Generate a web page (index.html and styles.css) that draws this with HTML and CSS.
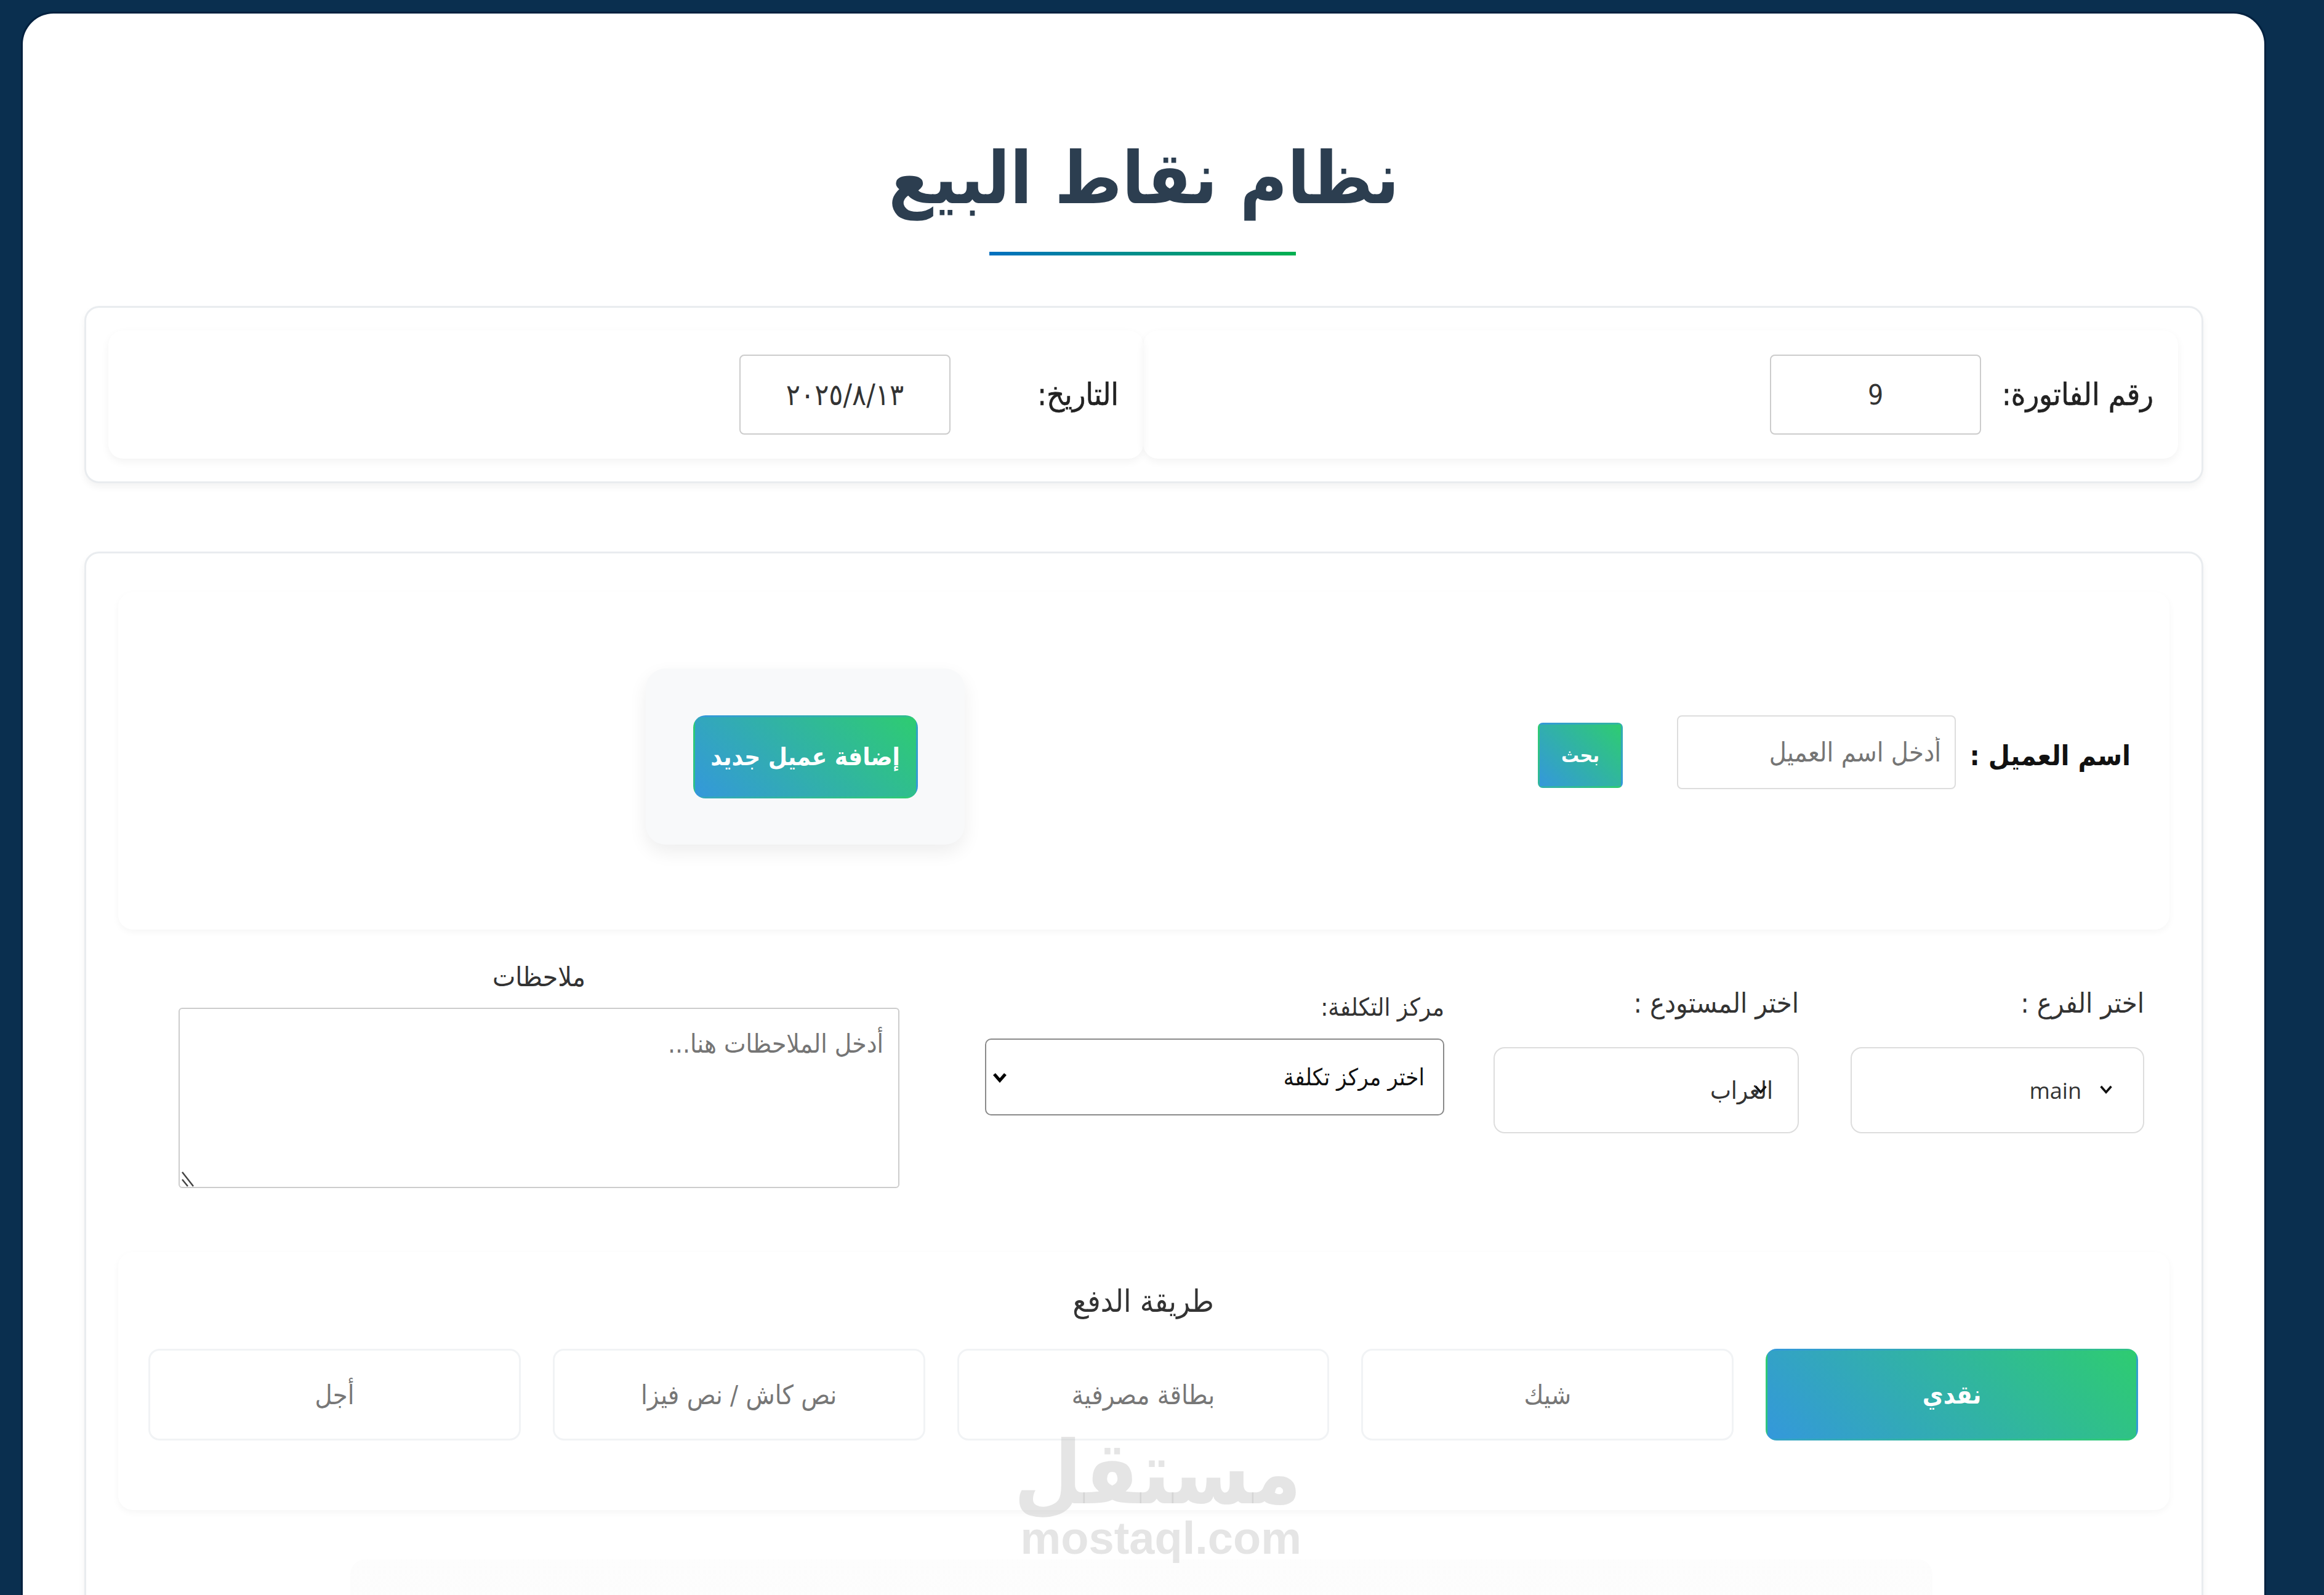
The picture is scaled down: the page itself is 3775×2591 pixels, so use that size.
FILE: index.html
```html
<!DOCTYPE html>
<html lang="ar" dir="rtl">
<head>
    <meta charset="UTF-8">
    <meta name="viewport" content="width=device-width, initial-scale=1.0">
    <title>نظام نقاط البيع</title>
    <link rel="stylesheet" href="styles.css">
</head>
<body>

    <div class="page">
        <h1 class="page-title">نظام نقاط البيع</h1>
        <div class="title-line"></div>

        <!-- رأس الفاتورة -->
        <section class="card invoice-card">
            <div class="invoice-part">
                <label class="invoice-label">رقم الفاتورة:</label>
                <input class="invoice-input" type="text" value="9">
            </div>
            <div class="invoice-part">
                <label class="invoice-label date-label">التاريخ:</label>
                <input class="invoice-input date-input" type="text" value="٢٠٢٥/٨/١٣">
            </div>
        </section>

        <section class="card main-card">
            <!-- العميل -->
            <div class="customer-card">
                <label class="customer-label">اسم العميل :</label>
                <input class="customer-input" type="text" placeholder="أدخل اسم العميل">
                <button class="search-btn" type="button">بحث</button>
                <div class="add-box">
                    <button class="add-btn" type="button">إضافة عميل جديد</button>
                </div>
            </div>

            <!-- الفرع والمستودع -->
            <div class="form-row">
                <div class="field field-branch">
                    <label class="field-label">اختر الفرع :</label>
                    <div class="select-wrap">
                        <select class="plain-select select-branch"><option>main</option></select>
                        <svg class="chevron" viewBox="0 0 20 14"><path d="M3 3l7 8 7-8" fill="none" stroke="#111" stroke-width="3"/></svg>
                    </div>
                </div>
                <div class="field field-store">
                    <label class="field-label">اختر المستودع :</label>
                    <div class="select-wrap">
                        <select class="plain-select select-store"><option>الغراب</option></select>
                        <svg class="chevron" viewBox="0 0 20 14"><path d="M3 3l7 8 7-8" fill="none" stroke="#111" stroke-width="3"/></svg>
                    </div>
                </div>
                <div class="field field-cost">
                    <label class="cost-label">مركز التكلفة:</label>
                    <div class="select-wrap">
                        <select class="cost-select"><option>اختر مركز تكلفة</option></select>
                        <svg class="cost-chevron" viewBox="0 0 20 14"><path d="M3 3l7 8 7-8" fill="none" stroke="#000" stroke-width="4"/></svg>
                    </div>
                </div>
                <div class="field field-notes">
                    <label class="notes-label">ملاحظات</label>
                    <div class="select-wrap">
                        <textarea class="notes-input" placeholder="أدخل الملاحظات هنا..."></textarea>
                        <svg class="resize-mark" viewBox="0 0 24 28"><path d="M2 4l18 23M2 16l9 11" fill="none" stroke="#444" stroke-width="2.5"/></svg>
                    </div>
                </div>
            </div>

            <!-- طريقة الدفع -->
            <div class="payment-card">
                <h3 class="payment-title">طريقة الدفع</h3>
                <div class="payment-list">
                    <button class="pay-btn active" type="button">نقدي</button>
                    <button class="pay-btn" type="button">شيك</button>
                    <button class="pay-btn" type="button">بطاقة مصرفية</button>
                    <button class="pay-btn" type="button">نص كاش / نص فيزا</button>
                    <button class="pay-btn" type="button">أجل</button>
                </div>
            </div>

            <div class="next-card"></div>
        </section>
    </div>

    <!-- علامة مستقل -->
    <div class="watermark">
        <div class="watermark-ar">مستقل</div>
        <div class="watermark-en">mostaql.com</div>
    </div>

</body>
</html>
```

FILE: styles.css
```css
* {
    margin: 0;
    padding: 0;
    box-sizing: border-box;
}

html,
body {
    height: 100vh;
    overflow: hidden;
}

body {
    padding: 22px 97px 0 37px;
    background-color: #0a2f4f;
    font-family: "DejaVu Sans Condensed", "DejaVu Sans", sans-serif;
    color: #2c3e50;
}

button,
input,
select,
textarea {
    font-family: inherit;
}

.page {
    height: 2800px;
    padding: 0 99px 0 100px;
    background: #fff;
    border-radius: 50px 50px 0 0;
    box-shadow: 0 0 0 3px #02213f;
}

.page-title {
    padding-top: 198px;
    height: 338px;
    font-size: 117px;
    line-height: 140px;
    font-weight: 700;
    text-align: center;
    color: #2c3e50;
}

.title-line {
    width: 498px;
    height: 6px;
    margin: 49px auto 82px;
    position: relative;
    left: -2px;
    background: linear-gradient(to right, #0070c0, #00b050);
}

.card {
    background: #fff;
    border: 3px solid #e9ecef;
    border-radius: 24px;
    box-shadow: 0 6px 12px rgba(0, 0, 0, 0.05);
}

/* رأس الفاتورة */
.invoice-card {
    display: flex;
    height: 288px;
    padding: 37px 38px 37px 36px;
}

.invoice-part {
    flex: 1;
    display: flex;
    align-items: center;
    padding: 0 40px;
    border-radius: 24px;
    box-shadow: 0 5px 14px rgba(0, 0, 0, 0.05);
}

.invoice-label {
    width: 255px;
    margin-left: 25px;
    font-size: 50px;
    font-weight: 500;
    color: #222;
    -webkit-text-stroke: 0.6px #222;
}

.date-label {
    width: 248px;
}

.invoice-input {
    width: 343px;
    height: 130px;
    border: 2px solid #ccc;
    border-radius: 8px;
    text-align: center;
    font-size: 44px;
    color: #333;
}

.date-input {
    font-size: 48px;
}

/* العميل */
.main-card {
    height: 1800px;
    margin-top: 111px;
    padding: 63px 52px 0 52px;
}

.customer-card {
    display: flex;
    align-items: center;
    height: 548px;
    padding: 0 63px 18px 0;
    border-radius: 24px;
    box-shadow: 0 4px 12px rgba(0, 0, 0, 0.04);
}

.customer-label {
    width: 260px;
    margin-left: 24px;
    font-size: 45px;
    font-weight: 700;
    color: #111;
    white-space: nowrap;
}

.customer-input {
    width: 453px;
    height: 120px;
    margin-bottom: 10px;
    padding: 0 22px;
    border: 2px solid #ddd;
    border-radius: 8px;
    font-size: 43px;
    color: #333;
}

.customer-input::placeholder,
.notes-input::placeholder {
    color: #757575;
}

.search-btn {
    width: 138px;
    height: 106px;
    margin-right: 88px;
    border: 3px solid transparent;
    border-radius: 8px;
    background: linear-gradient(45deg, #3498db, #2ecc71);
    color: #fff;
    font-size: 32px;
    font-weight: 700;
}

.add-box {
    display: flex;
    align-items: center;
    justify-content: center;
    width: 518px;
    height: 286px;
    margin-top: 4px;
    margin-right: 931px;
    background: #f8f9fa;
    border-radius: 32px;
    box-shadow: 0 12px 30px rgba(0, 0, 0, 0.07);
}

.add-btn {
    width: 365px;
    height: 135px;
    border: 3px solid transparent;
    border-radius: 20px;
    background: linear-gradient(45deg, #3498db, #2ecc71);
    color: #fff;
    font-size: 40px;
    font-weight: 700;
}

/* الفرع والمستودع */
.form-row {
    display: flex;
    align-items: flex-start;
    height: 524px;
    padding: 50px 41px 0 0;
}

.field-branch {
    width: 477px;
    margin-top: 43px;
}

.field-store {
    width: 496px;
    margin-top: 43px;
    margin-right: 84px;
}

.field-cost {
    width: 746px;
    margin-top: 54px;
    margin-right: 80px;
}

.field-notes {
    width: 1171px;
    margin-right: 139px;
}

.field-label {
    display: block;
    height: 54px;
    margin-bottom: 44px;
    font-size: 45px;
    line-height: 54px;
    font-weight: 500;
    color: #333;
}

.select-wrap {
    position: relative;
}

.plain-select {
    width: 100%;
    height: 140px;
    border: 2px solid #ddd;
    border-radius: 18px;
    background: #fff;
    appearance: none;
    font-size: 40px;
    color: #333;
}

.select-branch {
    padding-right: 100px;
    font-family: "Open Sans", sans-serif;
    font-size: 36px;
}

.select-store {
    padding-right: 40px;
}

.chevron {
    position: absolute;
    top: 60px;
    right: 50px;
    width: 24px;
    height: 17px;
}

.cost-label {
    display: block;
    height: 44px;
    margin-bottom: 29px;
    font-size: 40px;
    line-height: 44px;
    font-weight: 500;
    color: #333;
}

.cost-select {
    width: 100%;
    height: 125px;
    padding: 0 30px;
    border: 2px solid #8a8a8a;
    border-radius: 10px;
    background: #fff;
    appearance: none;
    font-size: 38px;
    font-weight: 500;
    color: #111;
}

.cost-chevron {
    position: absolute;
    top: 54px;
    left: 10px;
    width: 28px;
    height: 18px;
}

.notes-label {
    display: block;
    height: 54px;
    margin-bottom: 23px;
    font-size: 44px;
    line-height: 54px;
    text-align: center;
    color: #333;
}

.notes-input {
    display: block;
    width: 100%;
    height: 293px;
    padding: 32px 24px;
    border: 2px solid #ccc;
    border-radius: 6px;
    font-size: 42px;
    resize: none;
}

.resize-mark {
    position: absolute;
    bottom: 2px;
    left: 4px;
    width: 24px;
    height: 28px;
}

/* طريقة الدفع */
.payment-card {
    height: 419px;
    padding: 0 51px 0 49px;
    border-radius: 24px;
    box-shadow: 0 4px 12px rgba(0, 0, 0, 0.04);
}

.payment-title {
    height: 157px;
    padding-top: 50px;
    font-size: 50px;
    line-height: 60px;
    font-weight: 400;
    text-align: center;
    color: #333;
}

.payment-list {
    display: flex;
    gap: 52px;
}

.pay-btn {
    flex: 1;
    height: 149px;
    border: 3px solid #f1f3f5;
    border-radius: 18px;
    background: #fff;
    font-size: 43px;
    color: #777;
}

.pay-btn.active {
    border-color: transparent;
    background: linear-gradient(45deg, #3498db, #2ecc71);
    color: #fff;
    font-size: 41px;
    font-weight: 700;
}

.next-card {
    width: 2570px;
    height: 300px;
    margin: 80px 385px 0 0;
    background: linear-gradient(#fdfdfd, #f9f9f9);
    border-radius: 24px;
}

/* علامة مستقل */
.watermark {
    position: absolute;
    top: 2318px;
    left: 1659px;
    width: 455px;
    text-align: center;
    color: rgba(190, 190, 190, 0.4);
    font-weight: 700;
}

.watermark-ar {
    height: 146px;
    font-size: 142px;
    line-height: 150px;
}

.watermark-en {
    font-family: "Liberation Sans", sans-serif;
    font-size: 74px;
    line-height: 70px;
}
```
